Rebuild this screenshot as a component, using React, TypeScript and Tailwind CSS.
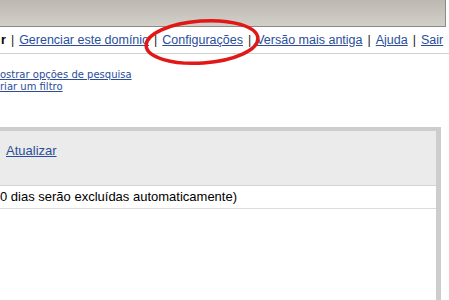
const NAV = [
  "Gerenciar este domínio",
  "Configurações",
  "Versão mais antiga",
  "Ajuda",
  "Sair",
];

export default function App() {
  return (
    <div className="relative h-[300px] w-[449px] overflow-hidden bg-white font-['Liberation_Sans',Arial,sans-serif]">
      {/* browser chrome strip */}
      <div className="flex h-[27px] w-full">
        <div className="h-full w-[446px] border-b border-r border-[#8c8a85] bg-gradient-to-b from-[#bcb8b0] to-[#d3d0c9]" />
      </div>

      {/* top nav */}
      <div className="flex h-[27px] items-center whitespace-nowrap border-b border-[#d0d0d0] pl-[1px] text-[12.5px] text-[#222]">
        <span className="font-bold text-black">r</span>
        {NAV.map((item) => (
          <span key={item} className="flex items-center">
            <span className="px-[5px]">|</span>
            <a href="#" className="text-[#2a4e9b] underline">
              {item}
            </a>
          </span>
        ))}
      </div>

      {/* search links */}
      <div className="flex flex-col pt-[15px] font-['DejaVu_Sans',Verdana,sans-serif] text-[10px] leading-[12px] text-[#2a4e9b]">
        <a href="#" className="underline">ostrar opções de pesquisa</a>
        <a href="#" className="underline">riar um filtro</a>
      </div>

      {/* mail box */}
      <div className="mt-[34px] w-[441px] border-r-[5px] border-t-[4px] border-[#cdcdcd]">
        <div className="h-[55px] border-b border-[#d4d4d4] bg-[#ebebeb] pl-[6px] pt-[10px] text-[13px]">
          <a href="#" className="text-[#2a4e9b] underline">Atualizar</a>
        </div>
        <div className="flex h-[23px] items-center border-b border-[#dcdcdc] text-[13px] text-black">
          0 dias serão excluídas automaticamente)
        </div>
        <div className="h-[100px]" />
      </div>

      {/* red annotation ellipse */}
      <svg className="pointer-events-none absolute left-0 top-0" width="449" height="300">
        <ellipse
          cx="202"
          cy="42"
          rx="56"
          ry="21"
          transform="rotate(-4 202 42)"
          fill="none"
          stroke="#e01818"
          strokeWidth="3.5"
        />
      </svg>
    </div>
  );
}
